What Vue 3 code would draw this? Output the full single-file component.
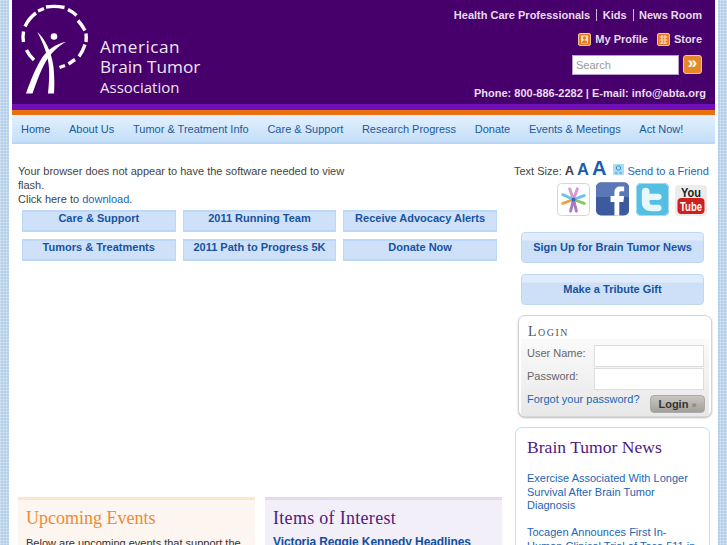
<template>
  <div class="page">
    <div class="wrap">
      <header class="masthead">
        <div class="logo">
          <svg class="logo-mark" width="80" height="100" viewBox="12 0 80 100">
            <g fill="none" stroke="#fff" stroke-width="3.400">
              <path d="M34 60 Q29 55.500 26.500 50" />
              <path d="M23.500 42 Q22.500 37 23.500 31.500" />
              <path d="M25 26.500 Q29 18 36 13" />
              <path d="M38 11 L44 8.500" />
              <path d="M46 7 Q55 5.500 64.500 7.500" />
              <path d="M68 9.500 Q73 12 76.500 15.500" />
              <path d="M78 20.500 Q82 25 85 30.500" />
              <path d="M86 33.500 Q86.500 37 86 42" />
              <path d="M85 44.500 Q83 51 79 56.500" />
              <path d="M75 59.500 L68.500 64" />
              <path d="M65 65.500 L59.500 67.500" />
            </g>
            <circle cx="54" cy="36.500" r="3.300" fill="#fff" />
            <path d="M37.300 31.700 C44 38 51.500 50 53.500 67 C54.500 78 54.500 87 54 93.500 L48 93.500 C49.500 80 50 66 47 56 C45 48 41.500 40 37.300 31.700 Z" fill="#fff" />
            <path d="M66 41.700 C55 44 47.500 50 42.500 57 C35.500 68 30 82 26 93.500 L32.500 93.500 C36 84 40 72 45 63 C50 54 57 47 66 41.700 Z" fill="#fff" />
          </svg>
          <div class="logo-name">
            <div class="logo-first">American</div>
            <div>Brain Tumor</div>
            <div class="logo-small">Association</div>
          </div>
        </div>
        <div class="tools">
          <div class="top-links">
            <a>Health Care Professionals</a><a>Kids</a><a>News Room</a>
          </div>
          <div class="profile-links">
            <span class="profile-item">
              <svg width="13" height="13" viewBox="0 0 13 13"><rect x=".5" y=".5" width="12" height="12" rx="1.500" fill="#e8791e" stroke="#f3c79a"/><rect x="3" y="2.500" width="7" height="8" fill="#fbe3cc"/><circle cx="6.500" cy="5" r="1.700" fill="#e8791e"/><path d="M3.500 10c.3-2 1.500-2.800 3-2.800s2.700.8 3 2.800z" fill="#e8791e"/></svg>
              My Profile
            </span>
            <span class="profile-item">
              <svg width="13" height="13" viewBox="0 0 13 13"><rect x=".5" y=".5" width="12" height="12" rx="1.500" fill="#e8791e" stroke="#f3c79a"/><path d="M2.500 4h8M2.500 7h8M2.500 10h8M5 2v9M8 2v9" stroke="#fbe3cc" fill="none"/></svg>
              Store
            </span>
          </div>
          <div class="search-row">
            <div class="search-box">Search</div>
            <div class="search-go">»</div>
          </div>
          <div class="contact">Phone: 800-886-2282 | E-mail: info@abta.org</div>
        </div>
      </header>
      <nav class="nav">
        <a v-for="item in navItems" :key="item">{{ item }}</a>
      </nav>

      <div class="content">
        <div class="main">
          <div class="flash">
            Your browser does not appear to have the software needed to view flash.<br>
            Click here to <a>download</a>.
          </div>
          <div class="quick-links">
            <a v-for="link in quickLinks" :key="link">{{ link }}</a>
          </div>
          <div class="panels">
            <section class="panel events">
              <h2>Upcoming Events</h2>
              <p>Below are upcoming events that support the</p>
            </section>
            <section class="panel interest">
              <h2>Items of Interest</h2>
              <a>Victoria Reggie Kennedy Headlines</a>
            </section>
          </div>
        </div>

        <aside class="side">
          <div class="text-size">
            Text Size:
            <span class="size-a a1">A</span>
            <span class="size-a a2">A</span>
            <span class="size-a a3">A</span>
            <svg class="friend-icon" width="11" height="11" viewBox="0 0 11 11"><rect width="11" height="11" rx="1" fill="#a9dcf5"/><circle cx="5.500" cy="4" r="2.200" fill="none" stroke="#3f8fd0"/><path d="M2 9h2.500M6.500 9H9" stroke="#3f8fd0"/></svg>
            <a>Send to a Friend</a>
          </div>
          <div class="social">
            <svg width="33" height="33" viewBox="0 0 34 34">
              <rect x=".5" y=".5" width="33" height="33" rx="4" fill="#fff" stroke="#d6d6d6"/>
              <g stroke-width="3" stroke-linecap="round">
                <path d="M17 17 L13 6 M17 17 L21 6" stroke="#d59bd0"/>
                <path d="M17 17 L6 12 M17 17 L28 13" stroke="#6fc0e8"/>
                <path d="M17 17 L6 21" stroke="#f0a040"/>
                <path d="M17 17 L28 21" stroke="#8cc46a"/>
                <path d="M17 17 L14 29 M17 17 L20 29" stroke="#a57cc4"/>
              </g>
              <circle cx="17" cy="17" r="2" fill="#2f6fb5"/>
            </svg>
            <svg width="33" height="34" viewBox="0 0 34 34">
              <rect width="34" height="34" rx="5" fill="#3c5a9e"/>
              <path d="M0 5a5 5 0 0 1 5-5h24a5 5 0 0 1 5 5v10H0z" fill="#5a78b8"/>
              <path d="M19 34V20h-4v-6h4v-4c0-4 2.500-6 6-6h4v5h-3c-1.500 0-2 .6-2 2v3h5l-.8 6H24v14z" fill="#fff"/>
            </svg>
            <svg width="33" height="33" viewBox="0 0 34 34">
              <rect width="34" height="34" rx="5" fill="#55bfe3"/>
              <rect x=".5" y=".5" width="33" height="33" rx="5" fill="none" stroke="#a9dcec"/>
              <path d="M10 5c2.500 0 4 1.500 4 4v2h9c2 0 3.500 1.500 3.500 3.200S25 17.500 23 17.500h-9v2.500c0 1.500 1 2.500 3 2.500h6c2 0 3.500 1.500 3.500 3.300S25 29 23 29h-7c-6 0-10-3.500-10-9V9c0-2.500 1.500-4 4-4z" fill="#e8f7fc"/>
            </svg>
            <svg width="32" height="31" viewBox="0 0 32 31">
              <rect width="32" height="31" rx="4" fill="#ececec"/>
              <text x="16" y="12" text-anchor="middle" class="yt-you" textLength="20" lengthAdjust="spacingAndGlyphs">You</text>
              <rect x="2.500" y="13" width="27" height="16" rx="4" fill="#cf1f1f"/>
              <text x="16" y="26" text-anchor="middle" class="yt-tube" textLength="22" lengthAdjust="spacingAndGlyphs">Tube</text>
            </svg>
          </div>
          <a class="big-btn btn-signup">Sign Up for Brain Tumor News</a>
          <a class="big-btn btn-tribute">Make a Tribute Gift</a>
          <div class="login">
            <h3>Login</h3>
            <div class="login-body">
              <div class="login-row"><label>User Name:</label><div class="field"></div></div>
              <div class="login-row"><label>Password:</label><div class="field"></div></div>
              <div class="login-foot">
                <a>Forgot your password?</a>
                <span class="login-btn">Login <small>»</small></span>
              </div>
            </div>
          </div>
          <div class="news">
            <h2>Brain Tumor News</h2>
            <a>Exercise Associated With Longer Survival After Brain Tumor Diagnosis</a>
            <a>Tocagen Announces First In-Human Clinical Trial of Toca 511 in</a>
          </div>
        </aside>
      </div>
    </div>
  </div>
</template>

<script setup>
const navItems = [
  'Home',
  'About Us',
  'Tumor & Treatment Info',
  'Care & Support',
  'Research Progress',
  'Donate',
  'Events & Meetings',
  'Act Now!'
];

const quickLinks = [
  'Care & Support',
  '2011 Running Team',
  'Receive Advocacy Alerts',
  'Tumors & Treatments',
  '2011 Path to Progress 5K',
  'Donate Now'
];
</script>

<style>
html, body {
  margin: 0;
  height: 545px;
  overflow: hidden;
}
</style>

<style scoped>
.page {
  height: 545px;
  overflow: hidden;
  background-color: #b4cfe9;
  background-image:
    linear-gradient(to right, rgba(255,255,255,0.25) 1px, transparent 1px),
    linear-gradient(to bottom, rgba(255,255,255,0.25) 1px, transparent 1px);
  background-size: 3px 3px;
  font-family: "Liberation Sans", Arial, sans-serif;
  font-size: 11px;
  color: #444;
}

.wrap {
  width: 709px;
  margin-left: 9px;
  padding: 0 3px;
  box-sizing: border-box;
  background: #fff;
  height: 545px;
}

a {
  color: #2265b5;
}

.masthead {
  height: 104px;
  background: #47006b;
  border-bottom: 6px solid #7010b8;
  display: flex;
  justify-content: space-between;
}

.logo {
  display: flex;
}

.logo-mark {
  display: block;
}

.logo-name {
  margin: 37px 0 0 8px;
  color: #eee6f2;
  font-family: "Open Sans", sans-serif;
  font-size: 17.200px;
  line-height: 20px;
  white-space: nowrap;
}

.logo-first {
  letter-spacing: 0.5px;
}

.logo-small {
  font-size: 15px;
}

.tools {
  width: 300px;
  padding-right: 9px;
  box-sizing: border-box;
  color: #e6dcec;
  font-weight: bold;
  font-size: 11px;
  text-align: right;
}

.top-links {
  margin-top: 9px;
  padding-right: 4px;
  line-height: 13px;
}

.top-links a {
  color: inherit;
}

.top-links a + a {
  margin-left: 6px;
  padding-left: 5.500px;
  border-left: 1px solid #cbb8d6;
}

.profile-links {
  margin-top: 10px;
  padding-right: 4px;
  display: flex;
  justify-content: flex-end;
  gap: 9px;
  line-height: 14px;
}

.profile-item {
  display: flex;
  align-items: center;
  gap: 4px;
}

.search-row {
  margin-top: 9px;
  padding-right: 4px;
  display: flex;
  justify-content: flex-end;
  gap: 4px;
}

.search-box {
  width: 107px;
  height: 20px;
  line-height: 18px;
  box-sizing: border-box;
  padding-left: 3px;
  background: #fff;
  border: 1px solid #b9a0cc;
  color: #999;
  font-weight: normal;
  text-align: left;
  font-size: 11px;
}

.search-go {
  width: 19px;
  height: 19px;
  box-sizing: border-box;
  border: 1px solid #f3c79a;
  border-radius: 3px;
  background: #e8872a;
  color: #fff;
  font-size: 17px;
  line-height: 14px;
  text-align: center;
}

.contact {
  margin-top: 11px;
  line-height: 14px;
  white-space: nowrap;
}

.nav {
  height: 27px;
  border-top: 5px solid #e8720f;
  padding-left: 9px;
  display: flex;
  gap: 18.700px;
  align-items: center;
  background: linear-gradient(to bottom, #e3f0fd, #c5dff9);
  border-bottom: 2px solid #b9d6f5;
  font-size: 11px;
}

.nav a {
  color: #1a5a9e;
  white-space: nowrap;
}

.content {
  display: flex;
  padding-left: 6px;
}

.main {
  width: 485px;
  flex: none;
}

.flash {
  margin-top: 20px;
  width: 345px;
  line-height: 14px;
  color: #444;
}

.quick-links {
  display: grid;
  grid-template-columns: repeat(3, 153.500px);
  column-gap: 7.200px;
  row-gap: 7px;
  margin: 4px 0 0 4px;
}

.quick-links a {
  height: 22px;
  box-sizing: border-box;
  background: #cfe1f8;
  border: 1px solid #bcd8f8;
  border-width: 2px 1px;
  text-align: center;
  color: #17539f;
  font-weight: bold;
  font-size: 11px;
  line-height: 13px;
}

.panels {
  margin-top: 236px;
  display: grid;
  grid-template-columns: 237px 237px;
  column-gap: 10px;
}

.panel {
  height: 60px;
  border-top: 3px solid;
  padding: 7px 8px 0;
  box-sizing: border-box;
}

.panel h2 {
  margin: 0;
  font-family: "Liberation Serif", serif;
  font-weight: normal;
  font-size: 18px;
  line-height: 22px;
}

.events {
  background: #fdf5ef;
  border-color: #fde6c8;
}

.events h2 {
  color: #ee8a33;
}

.events p {
  margin: 7px 0 0;
  line-height: 14px;
  color: #333;
  white-space: nowrap;
}

.interest {
  background: #f3eff8;
  border-color: #e4d9ee;
}

.interest h2 {
  color: #4f1a7d;
  letter-spacing: 0.3px;
}

.interest a {
  display: block;
  margin-top: 6px;
  line-height: 14px;
  font-weight: bold;
  font-size: 12px;
  letter-spacing: -0.1px;
  color: #12509e;
  white-space: nowrap;
}

.side {
  flex: none;
  width: 206px;
  margin-left: 6px;
}

.text-size {
  margin: 13px 0 0 5px;
  height: 25px;
  white-space: nowrap;
  color: #444;
  display: flex;
  align-items: baseline;
}

.text-size a {
  margin-left: 3px;
}

.size-a {
  font-weight: bold;
  margin-left: 3px;
  color: #1a5cad;
}

.a1 {
  font-size: 13px;
  color: #444;
}

.a2 {
  font-size: 16.500px;
}

.a3 {
  font-size: 20px;
}

.friend-icon {
  margin-left: 7px;
}

.social {
  height: 34px;
  width: 198px;
  display: flex;
  justify-content: flex-end;
  align-items: flex-end;
  gap: 6.500px;
}

.yt-you {
  font-family: "Liberation Sans", sans-serif;
  font-weight: bold;
  font-size: 12px;
  fill: #222;
}

.yt-tube {
  font-family: "Liberation Sans", sans-serif;
  font-weight: bold;
  font-size: 12px;
  fill: #fff;
}

.big-btn {
  display: block;
  box-sizing: border-box;
  width: 183px;
  height: 31px;
  margin-left: 12px;
  border: 1px solid #bcd8f5;
  border-radius: 4px;
  background: linear-gradient(to bottom, #e0ecfb 0, #e0ecfb 7px, #cde0f7 8px, #cde0f7 100%);
  text-align: center;
  color: #17539f;
  font-weight: bold;
  font-size: 11px;
  line-height: 28px;
}

.btn-signup {
  margin-top: 16px;
}

.btn-tribute {
  margin-top: 11px;
}

.login {
  margin: 10px 0 0 9px;
  width: 194px;
  height: 102px;
  box-sizing: border-box;
  border: 1px solid #d5d5d5;
  border-radius: 7px;
  box-shadow: 0 1px 2px #bbb;
  padding: 0 2px;
  background: #fff;
}

.login h3 {
  margin: 0;
  padding: 9px 0 0 7px;
  height: 23px;
  box-sizing: border-box;
  font-family: "Liberation Serif", serif;
  font-weight: normal;
  font-size: 14px;
  line-height: 14px;
  color: #555;
  font-variant: small-caps;
  text-transform: lowercase;
  letter-spacing: 1.500px;
}

.login h3::first-letter {
  text-transform: uppercase;
}

.login-body {
  height: 77px;
  box-sizing: border-box;
  padding: 6px 5px 0 6px;
  background: linear-gradient(to bottom, #fafafa, #e8e8e8);
}

.login-row {
  display: flex;
  justify-content: space-between;
  margin-bottom: 1px;
}

.login-row label {
  color: #666;
  line-height: 16px;
  white-space: nowrap;
}

.field {
  width: 110px;
  height: 22px;
  box-sizing: border-box;
  background: #fff;
  border: 1px solid #ddd;
}

.login-foot {
  display: flex;
  justify-content: space-between;
  align-items: flex-start;
  line-height: 16px;
  white-space: nowrap;
}

.login-btn {
  width: 55px;
  height: 18px;
  margin: 4px -1px 0 0;
  border-radius: 4px;
  background: linear-gradient(to bottom, #c9c5bf, #a3a09b);
  border: 1px solid #aaa;
  box-sizing: border-box;
  text-align: center;
  font-weight: bold;
  font-size: 11px;
  color: #333;
}

.login-btn small {
  font-weight: normal;
  color: #666;
}

.news {
  margin: 10px 0 0 6px;
  width: 195px;
  height: 130px;
  box-sizing: border-box;
  border: 1px solid #bfe0f8;
  border-radius: 7px;
  padding: 8px 11px;
}

.news h2 {
  margin: 0 0 14px;
  font-family: "Liberation Serif", serif;
  font-weight: normal;
  font-size: 17.600px;
  line-height: 22px;
  color: #4f1a7d;
}

.news a {
  display: block;
  line-height: 13.500px;
  margin-bottom: 13.500px;
}
</style>
